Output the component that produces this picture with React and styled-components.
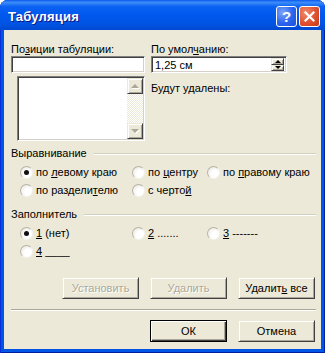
import styled, { createGlobalStyle } from "styled-components";

const Global = createGlobalStyle`
  html, body { margin: 0; padding: 0; background: #fff; }
  body {
    font-family: "Liberation Sans", Arial, sans-serif;
    font-size: 11px;
    color: #000;
  }
`;

const Window = styled.div`
  width: 325px;
  height: 353px;
  display: flex;
  flex-direction: column;
  background: #0055e5;
  border-radius: 8px 8px 0 0;
  box-shadow: inset 1px 0 #0831d9, inset -1px 0 #001ea0, inset 0 -1px #001ea0;
  overflow: hidden;
`;

const TitleBar = styled.div`
  height: 30px;
  flex: none;
  display: flex;
  align-items: center;
  padding: 3px 5px 0 8px;
  box-sizing: border-box;
  background: linear-gradient(
    #0a5af0 0%,
    #3d8cf8 8%,
    #0b62f2 22%,
    #0058ee 50%,
    #0054e3 80%,
    #0048d0 100%
  );
`;

const Title = styled.div`
  flex: 1;
  color: #fff;
  font-weight: bold;
  font-size: 13px;
  letter-spacing: 0.2px;
  text-shadow: 1px 1px #0a1883;
`;

const CapButton = styled.div`
  width: 21px;
  height: 21px;
  box-sizing: border-box;
  margin-left: 2px;
  border: 1px solid #fff;
  border-radius: 3px;
  display: flex;
  align-items: center;
  justify-content: center;
  color: #fff;
  font-weight: bold;
  font-size: 15px;
  background: ${(p) =>
    p.$close
      ? "radial-gradient(circle at 30% 30%, #f08a6c, #e0512f 55%, #c23b1a)"
      : "radial-gradient(circle at 30% 30%, #7ea6fb, #2a64ee 55%, #1b4fd8)"};
`;

const Client = styled.div`
  flex: 1;
  margin: 0 4px 4px;
  background: #ece9d8;
  padding: 13px 5px 0 7px;
  display: flex;
  flex-direction: column;
`;

const Top = styled.div`
  display: grid;
  grid-template-columns: 134px 136px;
  column-gap: 6px;
`;

const Column = styled.div`
  display: flex;
  flex-direction: column;
`;

const Label = styled.div`
  line-height: 13px;
  height: 13px;
  white-space: nowrap;
  margin-top: ${(p) => p.$gap || 0}px;
`;

const Key = styled.span`
  text-decoration: underline;
  text-underline-offset: 1px;
`;

const Sunken = styled.div`
  box-sizing: border-box;
  background: #fff;
  border: 1px solid;
  border-color: #808080 #fff #fff #808080;
  box-shadow: inset 1px 1px #404040, inset -1px -1px #d4d0c8;
`;

const Field = styled(Sunken)`
  height: 17px;
  display: flex;
  align-items: center;
  padding: 0 2px 0 3px;
`;

const FieldText = styled.div`
  flex: 1;
`;

const SpinBox = styled.div`
  width: 13px;
  height: 13px;
  display: flex;
  flex-direction: column;
`;

const Raised = styled.div`
  box-sizing: border-box;
  background: #ece9d8;
  border: 1px solid;
  border-color: #ece9d8 #404040 #404040 #ece9d8;
  box-shadow: inset 1px 1px #fff, inset -1px -1px #aca899;
  display: flex;
  align-items: center;
  justify-content: center;
`;

const SpinBtn = styled(Raised)`
  flex: 1;
`;

const Arrow = styled.div`
  width: 0;
  height: 0;
  border-left: ${(p) => p.$w}px solid transparent;
  border-right: ${(p) => p.$w}px solid transparent;
  ${(p) => (p.$down ? "border-top" : "border-bottom")}: ${(p) => p.$h}px solid
    ${(p) => (p.$off ? "#aca899" : "#000")};
  filter: ${(p) => (p.$off ? "drop-shadow(1px 1px 0 #fff)" : "none")};
`;

const ListBox = styled(Sunken)`
  margin: 3px 0 0 6px;
  height: 65px;
  display: flex;
  justify-content: flex-end;
  padding: 1px;
`;

const ScrollBar = styled.div`
  width: 16px;
  display: flex;
  flex-direction: column;
  background: repeating-conic-gradient(#fff 0 25%, #ece9d8 0 50%) 0 0 / 2px 2px;
`;

const ScrollBtn = styled(Raised)`
  height: 16px;
`;

const Track = styled.div`
  flex: 1;
`;

const GroupHead = styled.div`
  display: flex;
  align-items: center;
  height: 13px;
  line-height: 13px;
  margin-top: ${(p) => p.$gap}px;
`;

const Etch = styled.div`
  flex: 1;
  height: 0;
  border-top: 1px solid #d0d0bf;
  border-bottom: 1px solid #fff;
  margin-left: 7px;
`;

const Options = styled.div`
  display: grid;
  grid-template-columns: 112px 75px auto;
  grid-auto-rows: 18px;
  padding-left: 9px;
  margin-top: 3px;
`;

const Option = styled.div`
  display: flex;
  align-items: center;
  white-space: nowrap;
`;

const Caption = styled.span`
  white-space: pre;
`;

const Radio = styled.div`
  width: 13px;
  height: 13px;
  flex: none;
  box-sizing: border-box;
  border-radius: 50%;
  margin-right: 3px;
  border: 1px solid;
  border-color: #b7b4a6 #f4f3ee #f4f3ee #b7b4a6;
  background: radial-gradient(circle at 65% 65%, #fff 35%, #e4e2da 100%);
  display: flex;
  align-items: center;
  justify-content: center;
  &::after {
    content: "";
    width: 5px;
    height: 5px;
    border-radius: 50%;
    background: ${(p) => (p.$on ? "#111" : "transparent")};
  }
`;

const ButtonRow = styled.div`
  display: flex;
  justify-content: flex-end;
  gap: 11px;
  margin-top: ${(p) => p.$gap}px;
  padding-right: 1px;
`;

const Button = styled(Raised)`
  width: 77px;
  height: 22px;
  color: ${(p) => (p.$off ? "#aca899" : "#000")};
  text-shadow: ${(p) => (p.$off ? "1px 1px #fff" : "none")};
  ${(p) =>
    p.$default &&
    `
    border-color: #000;
    box-shadow: inset 1px 1px #fff, inset -1px -1px #404040, inset -2px -2px #aca899;
  `}
`;

const Separator = styled.div`
  margin-top: 10px;
  height: 0;
  border-top: 1px solid #aca899;
  border-bottom: 1px solid #fff;
`;

function Close() {
  return (
    <svg width="11" height="11" viewBox="0 0 11 11">
      <path d="M1.5 1.5 L9.5 9.5 M9.5 1.5 L1.5 9.5" stroke="#fff" strokeWidth="2.2" strokeLinecap="square" />
    </svg>
  );
}

function Choice({ on, children }) {
  return (
    <Option>
      <Radio $on={on} />
      <Caption>{children}</Caption>
    </Option>
  );
}

export default function App() {
  return (
    <>
      <Global />
      <Window>
        <TitleBar>
          <Title>Табуляция</Title>
          <CapButton>?</CapButton>
          <CapButton $close>
            <Close />
          </CapButton>
        </TitleBar>
        <Client>
          <Top>
            <Column>
              <Label>
                По<Key>з</Key>иции табуляции:
              </Label>
              <Field />
              <ListBox>
                <ScrollBar>
                  <ScrollBtn>
                    <Arrow $w={4} $h={4} $off />
                  </ScrollBtn>
                  <Track />
                  <ScrollBtn>
                    <Arrow $w={4} $h={4} $down $off />
                  </ScrollBtn>
                </ScrollBar>
              </ListBox>
            </Column>
            <Column>
              <Label>
                По умол<Key>ч</Key>анию:
              </Label>
              <Field>
                <FieldText>1,25 см</FieldText>
                <SpinBox>
                  <SpinBtn>
                    <Arrow $w={3} $h={3} />
                  </SpinBtn>
                  <SpinBtn>
                    <Arrow $w={3} $h={3} $down />
                  </SpinBtn>
                </SpinBox>
              </Field>
              <Label $gap={9}>Будут удалены:</Label>
            </Column>
          </Top>

          <GroupHead $gap={6}>
            Выравнивание
            <Etch />
          </GroupHead>
          <Options>
            <Choice on>
              {"по "}<Key>л</Key>евому краю
            </Choice>
            <Choice>
              {"по "}<Key>ц</Key>ентру
            </Choice>
            <Choice>
              {"по "}<Key>п</Key>равому краю
            </Choice>
            <Choice>
              по раздели<Key>т</Key>елю
            </Choice>
            <Choice>
              с черто<Key>й</Key>
            </Choice>
          </Options>

          <GroupHead $gap={9}>
            Заполнитель
            <Etch />
          </GroupHead>
          <Options>
            <Choice on>
              <Key>1</Key> (нет)
            </Choice>
            <Choice>
              <Key>2</Key> .......
            </Choice>
            <Choice>
              <Key>3</Key> -------
            </Choice>
            <Choice>
              <Key>4</Key> ____
            </Choice>
          </Options>

          <ButtonRow $gap={17}>
            <Button $off>Установить</Button>
            <Button $off>Удалить</Button>
            <Button>
              <Caption>
                Удалит<Key>ь</Key> все
              </Caption>
            </Button>
          </ButtonRow>
          <Separator />
          <ButtonRow $gap={9}>
            <Button $default>ОК</Button>
            <Button>Отмена</Button>
          </ButtonRow>
        </Client>
      </Window>
    </>
  );
}
